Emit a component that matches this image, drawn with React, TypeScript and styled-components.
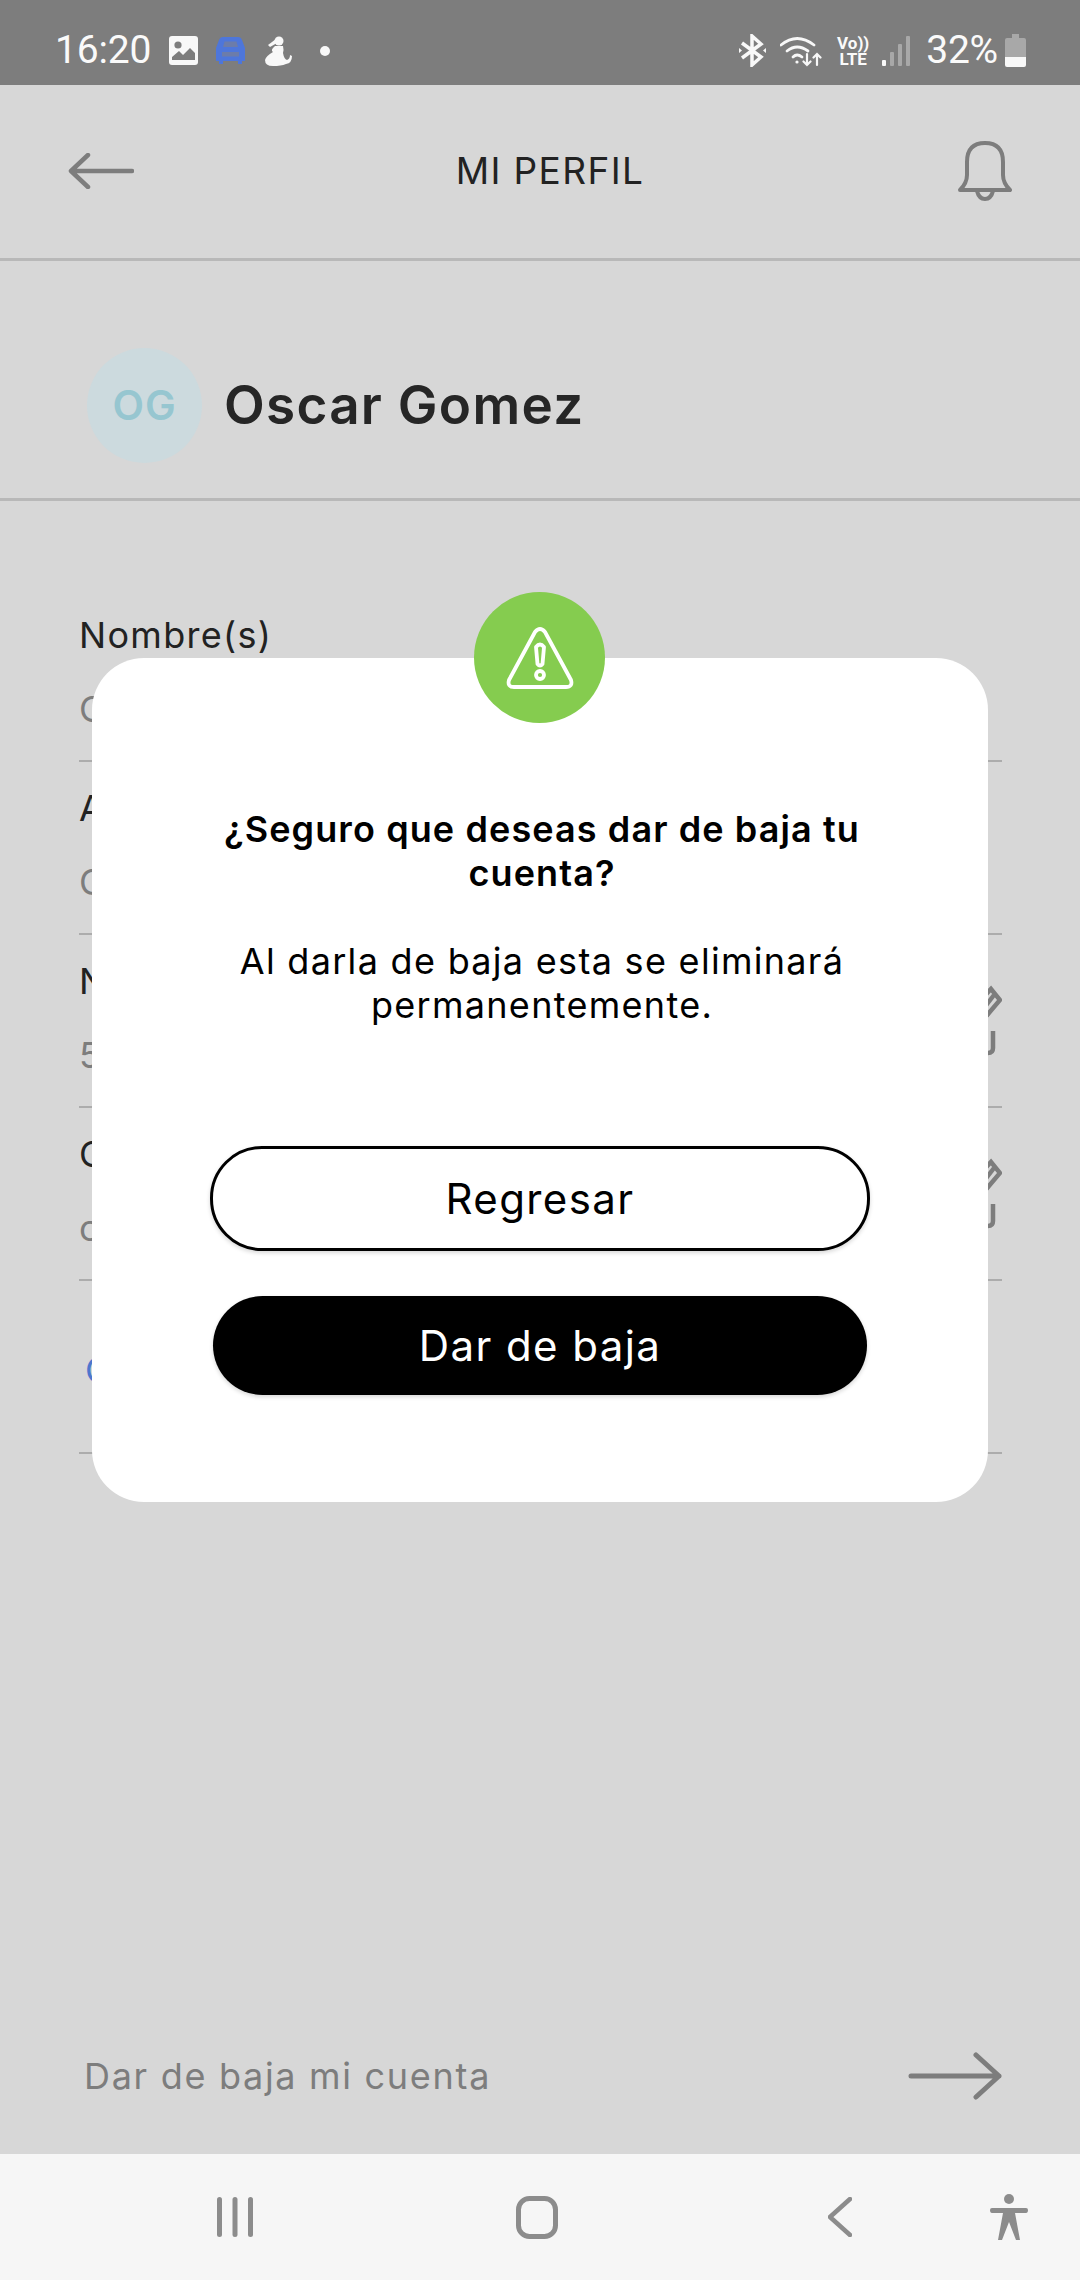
import React, { FC, ReactNode } from "react"
import styled, { createGlobalStyle } from "styled-components"

const GlobalStyle = createGlobalStyle`
  html, body {
    margin: 0;
    padding: 0;
    background: rgb(215, 215, 215);
  }
  * {
    box-sizing: border-box;
  }
`

const Screen = styled.main`
  position: relative;
  display: flex;
  flex-direction: column;
  width: 1080px;
  height: 2280px;
  overflow: hidden;
  font-family: Inter, "Liberation Sans", sans-serif;
  background: rgb(215, 215, 215);
`

const StatusBar = styled.header`
  display: flex;
  flex: none;
  align-items: center;
  justify-content: space-between;
  height: 85px;
  padding: 16px 54px 0 55px;
  color: rgb(250, 250, 250);
  background: rgb(125, 125, 125);
`

const StatusGroup = styled.div`
  display: flex;
  align-items: center;
`

const StatusText = styled.span<{ $left?: number }>`
  margin-left: ${props => props.$left || 0}px;
  font-family: Roboto, sans-serif;
  font-size: 39px;
  line-height: 45px;
  letter-spacing: -0.2px;
`

const StatusIcon = styled.svg<{ $left?: number }>`
  display: block;
  flex: none;
  margin-left: ${props => props.$left || 0}px;
`

const VoLte = styled.div`
  display: flex;
  flex-direction: column;
  align-items: center;
  width: 30px;
  margin-left: 16px;
  font-family: Roboto, sans-serif;
  font-size: 17px;
  font-weight: 700;
  line-height: 16px;
`

const TopBar = styled.div`
  display: flex;
  flex: none;
  align-items: center;
  justify-content: space-between;
  height: 176px;
  padding: 0 68px 2px;
  border-bottom: 3px solid rgb(184, 184, 184);
`

const PageTitle = styled.h1`
  margin: 0 0 0 8px;
  font-size: 37px;
  font-weight: 400;
  letter-spacing: 1.4px;
  color: rgb(34, 34, 34);
`

const Profile = styled.section`
  display: flex;
  flex: none;
  align-items: center;
  gap: 22px;
  height: 240px;
  padding: 51px 0 0 87px;
  border-bottom: 3px solid rgb(184, 184, 184);
`

const Avatar = styled.div`
  display: flex;
  flex: none;
  align-items: center;
  justify-content: center;
  width: 115px;
  height: 115px;
  font-size: 41px;
  font-weight: 600;
  letter-spacing: 1px;
  color: rgb(150, 198, 208);
  background: rgb(204, 218, 222);
  border-radius: 50%;
`

const UserName = styled.h2`
  margin: 0;
  font-size: 53px;
  font-weight: 600;
  letter-spacing: 1.3px;
  color: rgb(38, 38, 38);
`

const Form = styled.section`
  display: flex;
  flex: 1;
  flex-direction: column;
  padding: 88px 78px 0 79px;
`

const Field = styled.div`
  display: flex;
  align-items: flex-start;
  justify-content: space-between;
  height: 173px;
  padding-top: 26px;
  border-bottom: 2px solid rgb(172, 172, 172);
`

const FieldText = styled.div`
  display: flex;
  flex-direction: column;
  gap: 34px;
`

const FieldLabel = styled.span`
  font-size: 36px;
  line-height: 40px;
  letter-spacing: 1.3px;
  color: rgb(34, 34, 34);
`

const FieldValue = styled.span`
  font-size: 36px;
  line-height: 40px;
  letter-spacing: 1.3px;
  color: rgb(125, 125, 125);
`

const PasswordLink = styled.a`
  padding: 43px 0 0 6px;
  font-size: 36px;
  line-height: 40px;
  letter-spacing: 1.3px;
  color: rgb(78, 118, 205);
`

const LeaveRow = styled.div`
  display: flex;
  flex: none;
  align-items: center;
  justify-content: space-between;
  height: 157px;
  padding: 0 78px 0 84px;
`

const LeaveLabel = styled.span`
  font-size: 36px;
  letter-spacing: 1.7px;
  color: rgb(125, 125, 125);
`

const NavBar = styled.nav`
  display: flex;
  flex: none;
  align-items: center;
  height: 126px;
  padding: 0 0 0 217px;
  background: rgb(246, 246, 246);
`

const NavIcon = styled.svg<{ $left?: number }>`
  display: block;
  flex: none;
  margin-left: ${props => props.$left || 0}px;
`

const EditGlyph = styled.svg`
  display: block;
  flex: none;
  margin-top: 20px;
`

const Modal = styled.section`
  position: absolute;
  top: 658px;
  left: 92px;
  display: flex;
  flex-direction: column;
  align-items: center;
  width: 896px;
  height: 844px;
  padding: 149px 0 0 4px;
  background: rgb(255, 255, 255);
  border-radius: 52px;
`

const Badge = styled.div`
  position: absolute;
  top: -66px;
  left: 382px;
  display: flex;
  align-items: center;
  justify-content: center;
  width: 131px;
  height: 131px;
  background: rgb(133, 204, 79);
  border-radius: 50%;
`

const ModalTitle = styled.h3`
  width: 700px;
  margin: 0;
  font-size: 36px;
  font-weight: 600;
  line-height: 44px;
  letter-spacing: 1.1px;
  text-align: center;
  color: rgb(0, 0, 0);
`

const ModalText = styled.p`
  width: 700px;
  margin: 44px 0 0;
  font-size: 36px;
  font-weight: 400;
  line-height: 44px;
  letter-spacing: 1.3px;
  text-align: center;
  color: rgb(0, 0, 0);
`

const Button = styled.button<{ $solid?: boolean }>`
  flex: none;
  width: ${props => (props.$solid ? 654 : 660)}px;
  height: ${props => (props.$solid ? 99 : 105)}px;
  margin: ${props => (props.$solid ? "45px 0 0 -4px" : "119px 0 0 -4px")};
  padding: 0;
  font-family: inherit;
  font-size: 42px;
  letter-spacing: 1.4px;
  color: ${props => (props.$solid ? "rgb(255, 255, 255)" : "rgb(0, 0, 0)")};
  background: ${props => (props.$solid ? "rgb(0, 0, 0)" : "rgb(255, 255, 255)")};
  border: ${props => (props.$solid ? "0" : "3px solid rgb(0, 0, 0)")};
  border-radius: 52px;
  box-shadow: 0 2px 4px rgba(0, 0, 0, 0.16);
`

const EditIcon: FC = () => (
  <EditGlyph width="60" height="80" viewBox="0 0 60 80" fill="none" stroke="rgb(125, 125, 125)" strokeWidth="4.5">
    <path d="M49 8 L58 19 L46 33 L36 22 Z" />
    <path d="M52 14 L42 27" />
    <path d="M36 22 L20 36 L16 50 L30 46 L46 33" />
    <path d="M51 50 V67 Q51 72 46 72 H12" />
  </EditGlyph>
)

interface FieldRowProps {
  label: string
  value: string
  action?: ReactNode
}

const FieldRow: FC<FieldRowProps> = ({ label, value, action }) => (
  <Field>
    <FieldText>
      <FieldLabel>{label}</FieldLabel>
      <FieldValue>{value}</FieldValue>
    </FieldText>
    {action}
  </Field>
)

const App: FC = () => (
  <Screen>
    <GlobalStyle />
    <StatusBar>
      <StatusGroup>
        <StatusText>16:20</StatusText>
        <StatusIcon $left={18} width="29" height="29" viewBox="0 0 29 29">
          <rect width="29" height="29" rx="3" fill="rgb(248, 248, 248)" />
          <circle cx="9" cy="9" r="3.6" fill="rgb(125, 125, 125)" />
          <path d="M3 24 V21 L10 15 L14 19 L21 12 L26 17 V24 Z" fill="rgb(125, 125, 125)" />
        </StatusIcon>
        <StatusIcon $left={18} width="29" height="27" viewBox="0 0 29 27">
          <path d="M7 0 H22 Q25 0 26 3 L29 11 V24 H26 V27 H22 V24 H7 V27 H3 V24 H0 V11 L3 3 Q4 0 7 0 Z" fill="rgb(78, 118, 218)" />
          <path d="M7 10 H22 L20.5 4.5 H8.5 Z M6 15 V19.5 H23 V15 Z" fill="rgb(108, 124, 170)" />
        </StatusIcon>
        <StatusIcon $left={20} width="27" height="30" viewBox="0 0 27 30" fill="rgb(248, 248, 248)">
          <circle cx="14" cy="5" r="4.5" />
          <path d="M11 3 L3 9 L5 11 L12 7 Z" />
          <path d="M10 10 H18 Q19 14 18 17 Q19 23 22 24 Q25 23 25 19 L27 20 Q27 27 21 28 Q16 30 8 30 Q0 30 0 24 Q1 20 8 16 Q5 14 10 10 Z" />
        </StatusIcon>
        <StatusIcon $left={28} width="10" height="10" viewBox="0 0 10 10">
          <circle cx="5" cy="5" r="5" fill="rgb(248, 248, 248)" />
        </StatusIcon>
      </StatusGroup>
      <StatusGroup>
        <StatusIcon width="27" height="33" viewBox="0 0 27 33" fill="none" stroke="rgb(248, 248, 248)" strokeWidth="3.5">
          <path d="M3 9 L22 23 L13 31 V2 L22 10 L3 24" />
          <path d="M0 14 L3 16.5 L0 19 Z M27 14 L24 16.5 L27 19 Z" fill="rgb(248, 248, 248)" stroke="none" />
        </StatusIcon>
        <StatusIcon $left={14} width="42" height="32" viewBox="0 0 42 32" fill="none" stroke="rgb(248, 248, 248)" strokeWidth="2.8" strokeLinecap="round">
          <path d="M1 10 Q17 -3 34 10" />
          <path d="M7 16 Q17 8 28 16" />
          <path d="M13 22 Q17 18 22 22" />
          <circle cx="17" cy="27" r="1.6" fill="rgb(248, 248, 248)" stroke="none" />
          <path d="M27 19 V30 M23.5 26.5 L27 30 L30.5 26.5 M37 30 V19 M33.5 22.5 L37 19 L40.5 22.5" strokeWidth="2.2" />
        </StatusIcon>
        <VoLte>
          <span>Vo))</span>
          <span>LTE</span>
        </VoLte>
        <StatusIcon $left={14} width="28" height="30" viewBox="0 0 28 30">
          <rect x="0" y="24" width="4" height="6" rx="1" fill="rgb(248, 248, 248)" />
          <rect x="8" y="16" width="4" height="14" rx="1" fill="rgb(168, 168, 168)" />
          <rect x="16" y="8" width="4" height="22" rx="1" fill="rgb(168, 168, 168)" />
          <rect x="24" y="0" width="4" height="30" rx="1" fill="rgb(168, 168, 168)" />
        </StatusIcon>
        <StatusText $left={16}>32%</StatusText>
        <StatusIcon $left={7} width="21" height="33" viewBox="0 0 21 33">
          <path d="M7 0 H14 V4 H19 Q21 4 21 6 V23 H0 V6 Q0 4 2 4 H7 Z" fill="rgb(168, 168, 168)" />
          <path d="M0 23 H21 V31 Q21 33 19 33 H2 Q0 33 0 31 Z" fill="rgb(248, 248, 248)" />
        </StatusIcon>
      </StatusGroup>
    </StatusBar>

    <TopBar>
      <svg width="66" height="36" viewBox="0 0 66 36" fill="none" stroke="rgb(125, 125, 125)" strokeWidth="4.5" strokeLinecap="round" strokeLinejoin="round">
        <path d="M64 18 H3 M20 2 L3 18 L20 34" />
      </svg>
      <PageTitle>MI PERFIL</PageTitle>
      <svg width="54" height="60" viewBox="0 0 54 60" fill="none" stroke="rgb(125, 125, 125)" strokeWidth="4" strokeLinejoin="round">
        <path d="M2 49 Q9 42 9 34 V21 Q9 2 27 2 Q45 2 45 21 V34 Q45 42 52 49 Z" />
        <path d="M19 50 Q21 58 27 58 Q33 58 35 50" />
      </svg>
    </TopBar>

    <Profile>
      <Avatar>OG</Avatar>
      <UserName>Oscar Gomez</UserName>
    </Profile>

    <Form>
      <FieldRow label="Nombre(s)" value="Oscar" />
      <FieldRow label="Apellidos" value="Gomez" />
      <FieldRow label="Número de celular" value="5512345678" action={<EditIcon />} />
      <FieldRow label="Correo electrónico" value="correo@mail.com" action={<EditIcon />} />
      <Field>
        <PasswordLink>Cambiar contraseña</PasswordLink>
      </Field>
    </Form>

    <LeaveRow>
      <LeaveLabel>Dar de baja mi cuenta</LeaveLabel>
      <svg width="94" height="48" viewBox="0 0 94 48" fill="none" stroke="rgb(125, 125, 125)" strokeWidth="5" strokeLinecap="round" strokeLinejoin="round">
        <path d="M3 24 H91 M68 3 L91 24 L68 45" />
      </svg>
    </LeaveRow>

    <NavBar>
      <NavIcon width="36" height="40" viewBox="0 0 36 40" fill="rgb(140, 140, 140)">
        <rect x="0" y="0" width="5" height="40" rx="2.5" />
        <rect x="15.5" y="0" width="5" height="40" rx="2.5" />
        <rect x="31" y="0" width="5" height="40" rx="2.5" />
      </NavIcon>
      <NavIcon $left={263} width="42" height="43" viewBox="0 0 42 43" fill="none" stroke="rgb(140, 140, 140)" strokeWidth="5">
        <rect x="2.5" y="2.5" width="37" height="38" rx="11" />
      </NavIcon>
      <NavIcon $left={270} width="24" height="40" viewBox="0 0 24 40" fill="none" stroke="rgb(140, 140, 140)" strokeWidth="4.5" strokeLinecap="round" strokeLinejoin="round">
        <path d="M22 2 L2 20 L22 38" />
      </NavIcon>
      <NavIcon $left={138} width="38" height="46" viewBox="0 0 38 46" fill="rgb(140, 140, 140)">
        <circle cx="19" cy="5" r="5" />
        <path d="M2 14 H36 Q38 14 38 16 Q38 19 36 19 H25 L30 46 H26 L19 28 L12 46 H8 L13 19 H2 Q0 19 0 16 Q0 14 2 14 Z" />
      </NavIcon>
    </NavBar>

    <Modal>
      <Badge>
        <svg width="68" height="62" viewBox="0 0 68 62" fill="none" stroke="rgb(255, 255, 255)" strokeWidth="3.8" strokeLinejoin="round">
          <path d="M29 5 Q34 -1 39 5 L65 53 Q67 60 60 60 H8 Q1 60 3 53 Z" />
          <path d="M30 20 Q34 15 38 20 L36.5 37 Q34 40 31.5 37 Z" />
          <circle cx="34" cy="48" r="4" />
        </svg>
      </Badge>
      <ModalTitle>¿Seguro que deseas dar de baja tu cuenta?</ModalTitle>
      <ModalText>Al darla de baja esta se eliminará permanentemente.</ModalText>
      <Button>Regresar</Button>
      <Button $solid>Dar de baja</Button>
    </Modal>
  </Screen>
)

export default App
